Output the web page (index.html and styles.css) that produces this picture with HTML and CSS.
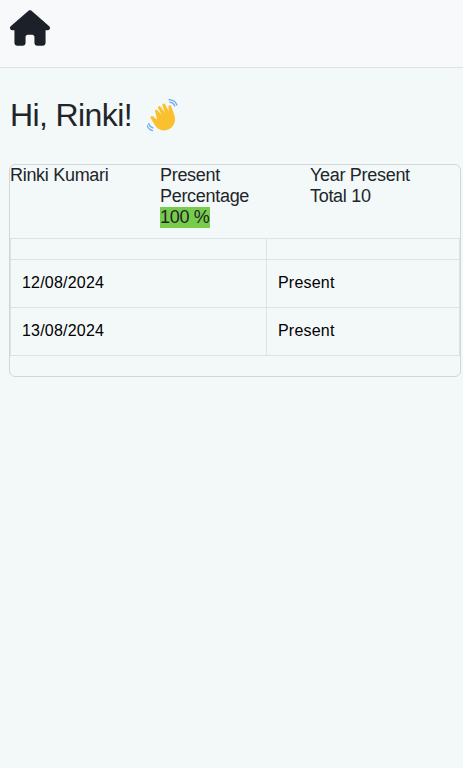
FILE: index.html
```html
<!DOCTYPE html>
<html lang="en">
<head>
  <meta charset="UTF-8">
  <meta name="viewport" content="width=device-width, initial-scale=1.0">
  <title>Attendance</title>
  <link rel="stylesheet" href="styles.css">
</head>

<body>
  <nav class="navbar">
    <a href="#" class="home-link" aria-label="Home">
      <svg class="home-icon" viewBox="0 0 576 512" xmlns="http://www.w3.org/2000/svg">
        <path d="M575.8 255.5c0 18-15 32.1-32 32.1h-32l.7 160.2c0 2.7-.2 5.4-.5 8.1V472c0 22.1-17.9 40-40 40H456c-1.1 0-2.2 0-3.3-.1c-1.4 .1-2.8 .1-4.2 .1H416 392c-22.1 0-40-17.9-40-40V448 384c0-17.7-14.3-32-32-32H256c-17.7 0-32 14.3-32 32v64 24c0 22.1-17.9 40-40 40H160 128.1c-1.5 0-3-.1-4.5-.2c-1.2 .1-2.4 .2-3.6 .2H104c-22.1 0-40-17.9-40-40V360c0-.9 0-1.9 .1-2.8V287.6H32c-18 0-32-14-32-32.1c0-9 3-17 10-24L266.4 8c7-7 15-8 22-8s15 2 21 7L564.8 231.5c8 7 12 15 11 24z"/>
      </svg>
    </a>
  </nav>

  <div class="container">
    <h1 class="greeting">
      Hi, Rinki!
      <svg class="wave" viewBox="0 0 36 36" xmlns="http://www.w3.org/2000/svg">
        <g fill="none" stroke="#6aa8f2" stroke-width="1.4" stroke-linecap="round">
          <path d="M25 3.500c2.500 .3 4.300 1.700 5.300 4"/>
          <path d="M24 .8c4 .2 7.200 2.400 8.600 5.800"/>
          <path d="M6.500 31.500c-2.400-.6-4-2.200-4.600-4.600"/>
          <path d="M6 34.500c-3.300-.8-5.300-3-6-6"/>
        </g>
        <path fill="#fbc02d" d="M9 14c-1.100-1.600 1-3.200 2.400-1.800l4.600 5-3.800-7.100c-1-1.900 1.500-3.300 2.700-1.600l4.400 6.300-2.400-7.600c-.6-2.100 2.100-3 3-1.200l3.900 7.500-.5-4.700c-.2-2.200 2.500-2.700 3.200-.6 1.300 3.700 3.100 7.600 3.800 11 1 5.300-1.100 11-5.900 13.600-5.200 2.800-11 1.600-14.800-2.800L4.300 21.200c-1.300-1.600 .8-3.500 2.400-2.200l4.300 3.700z"/>
      </svg>
    </h1>

    <div class="card">
      <div class="card-header">
        <div class="stat">Rinki Kumari</div>
        <div class="stat">Present Percentage <span class="badge">100 %</span></div>
        <div class="stat">Year Present Total 10</div>
      </div>

      <table class="attendance">
        <thead>
          <tr>
            <th class="col-date"></th>
            <th></th>
          </tr>
        </thead>
        <tbody>
          <tr>
            <td>12/08/2024</td>
            <td>Present</td>
          </tr>
          <tr>
            <td>13/08/2024</td>
            <td>Present</td>
          </tr>
        </tbody>
      </table>

      <div class="card-footer"></div>
    </div>
  </div>
</body>
</html>
```

FILE: styles.css
```css
body {
  margin: 0;
  min-height: 768px;
  font-family: "Liberation Sans", Arial, sans-serif;
  font-size: 18px;
  line-height: 21px;
  letter-spacing: -0.3px;
  color: #212529;
  background: #f3f8f9;
}

.navbar {
  height: 67px;
  background: #f8f9fb;
  border-bottom: 1px solid #dee2e6;
}

.home-link {
  display: block;
  padding: 10px 0 0 10px;
}

.home-icon {
  display: block;
  width: 40px;
  height: 36px;
  fill: #1c2029;
}

.container {
  padding: 27px 2px 0 9px;
}

.greeting {
  display: flex;
  align-items: center;
  gap: 15px;
  height: 40px;
  margin: 0 0 29px 1px;
  font-size: 32px;
  line-height: 40px;
  font-weight: 400;
  letter-spacing: -0.6px;
}

.wave {
  width: 33px;
  height: 33px;
}

.card {
  border: 1px solid #d3d6d7;
  border-radius: 6px;
}

.card-header {
  display: flex;
  padding-bottom: 10px;
}

.stat {
  width: 150px;
  padding-right: 20px;
  box-sizing: border-box;
}

.badge {
  display: block;
  width: fit-content;
  background: #77cc4b;
}

.attendance {
  width: 100%;
  border-collapse: collapse;
  border: 1px solid #dee2e6;
  color: #000;
  font-size: 16px;
  line-height: 24px;
  letter-spacing: 0.2px;
}

.attendance th {
  height: 20px;
  padding: 0;
  border: 1px solid #dee2e6;
}

.attendance td {
  padding: 11px 11px 12px;
  border: 1px solid #dee2e6;
}

.col-date {
  width: 255px;
}

.card-footer {
  height: 20px;
}
```
